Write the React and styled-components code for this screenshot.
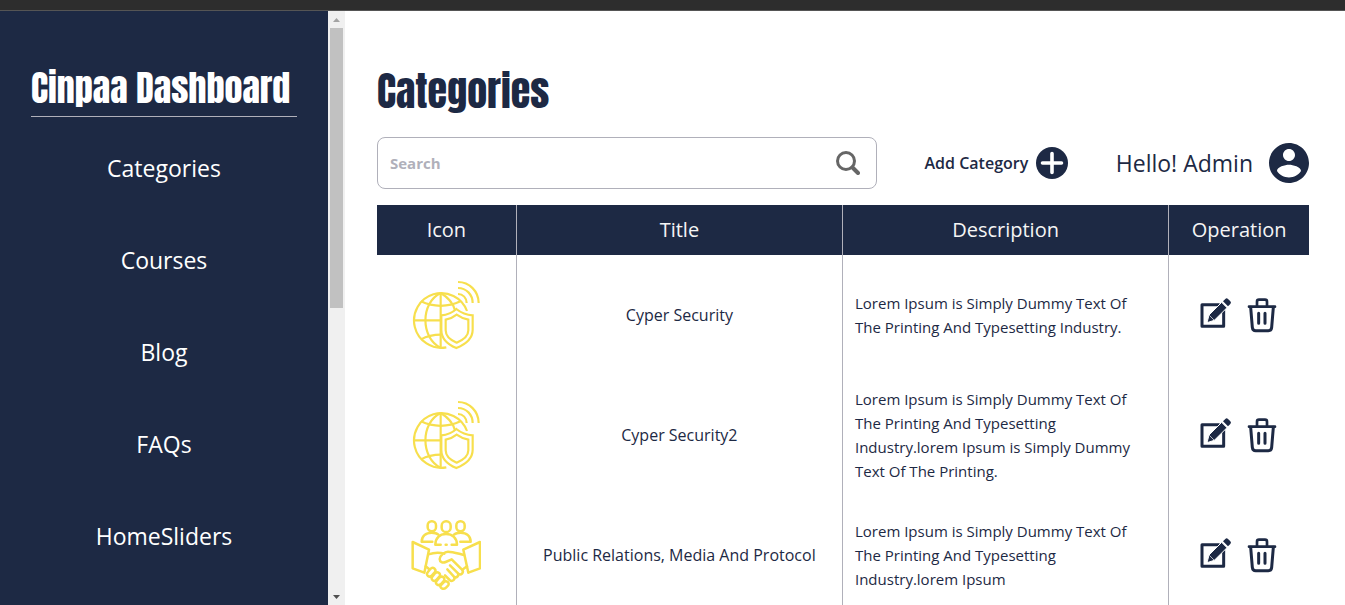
import React from "react";
import styled, { createGlobalStyle } from "styled-components";

const navy = "#1d2944";
const line = "#b0b0ba";
const yellow = "#f7df4d";

const GlobalStyle = createGlobalStyle`
  *, *::before, *::after { box-sizing: border-box; }
  body {
    margin: 0;
    background: #fff;
    color: ${navy};
    font-family: "Open Sans", "Noto Sans", sans-serif;
    font-size: 15px;
    line-height: 24px;
  }
  button { font: inherit; color: inherit; background: none; border: 0; padding: 0; cursor: pointer; }
  svg { display: block; flex: none; }
`;

const Page = styled.div`
  display: flex;
  flex-direction: column;
  height: 100vh;
  overflow: hidden;
`;

const TopStrip = styled.div`
  flex: none;
  height: 11px;
  background: #2d2d2d;
  border-bottom: 1px solid #555;
`;

const Body = styled.div`
  display: flex;
  flex: 1;
  min-height: 0;
`;

const Sidebar = styled.aside`
  flex: none;
  width: 328px;
  padding: 54px 31px 0;
  overflow: hidden;
  background: ${navy};
  color: #fff;
`;

const displayFont = `
  font-family: Anton, Roboto, "Liberation Sans", sans-serif;
  font-weight: 400;
  white-space: nowrap;
`;

const Brand = styled.h2`
  ${displayFont}
  margin: 0 0 23px;
  padding-bottom: 5px;
  border-bottom: 1px solid ${line};
  font-size: 36px;
  line-height: 46px;
`;

const Nav = styled.nav`
  display: flex;
  flex-direction: column;
  gap: 36px;
`;

const NavLink = styled.a`
  padding: 10px 0;
  color: #fff;
  font-size: 23px;
  line-height: 36px;
  text-align: center;
  text-decoration: none;
`;

const ScrollBar = styled.div`
  display: flex;
  flex-direction: column;
  flex: none;
  width: 17px;
  padding: 0 2px;
  background: #f0f0f0;
`;

const ScrollArrow = styled.div`
  display: grid;
  place-items: center;
  flex: none;
  height: 17px;
`;

const ScrollTrack = styled.div`
  flex: 1;
`;

const ScrollThumb = styled.div`
  height: 50%;
  background: #c1c1c1;
`;

const Main = styled.main`
  flex: 1;
  min-width: 0;
  padding: 52px 36px 0 32px;
  overflow: hidden;
`;

const Title = styled.h1`
  ${displayFont}
  margin: 0 0 18px;
  font-size: 40px;
  line-height: 56px;
`;

const Toolbar = styled.div`
  display: flex;
  align-items: center;
  justify-content: space-between;
  margin-bottom: 16px;
`;

const SearchBox = styled.label`
  display: flex;
  align-items: center;
  width: 500px;
  height: 52px;
  padding: 0 16px 0 12px;
  border: 1px solid ${line};
  border-radius: 8px;
`;

const SearchInput = styled.input`
  flex: 1;
  min-width: 0;
  padding: 0;
  border: 0;
  outline: 0;
  background: none;
  color: ${navy};
  font: inherit;
  font-weight: 700;
  &::placeholder { color: ${line}; opacity: 1; }
`;

const AddButton = styled.button`
  display: flex;
  align-items: center;
  gap: 8px;
  font-size: 16px;
  font-weight: 600;
`;

const Greeting = styled.div`
  display: flex;
  align-items: center;
  gap: 16px;
  font-size: 23px;
`;

const Table = styled.table`
  width: 100%;
  table-layout: fixed;
  border-collapse: separate;
  border-spacing: 0;
`;

const HeadCell = styled.th`
  width: ${(p) => p.$width};
  height: 50px;
  padding: 0;
  background: ${navy};
  color: #f5f5f5;
  font-size: 20px;
  font-weight: 500;
  &:not(:last-child) { border-right: 1px solid ${line}; }
`;

const Cell = styled.td`
  height: 120px;
  padding: ${(p) => (p.$text ? "0 24px 0 12px" : "0")};
  font-size: ${(p) => (p.$text ? "15px" : "16px")};
  text-align: ${(p) => (p.$text ? "left" : "center")};
  vertical-align: middle;
  &:not(:last-child) { border-right: 1px solid ${line}; }
`;

const Centered = styled.div`
  display: flex;
  align-items: center;
  justify-content: center;
  gap: 14px;
`;

const Arrow = ({ down }) => (
  <svg width="7" height="4" viewBox="0 0 7 4" aria-hidden="true">
    <path d={down ? "M0 0h7L3.5 4z" : "M0 4h7L3.5 0z"} fill={down ? "#505050" : "#a3a3a3"} />
  </svg>
);

const SearchIcon = () => (
  <svg width="24" height="24" viewBox="0 0 24 24" fill="none" stroke="#666" aria-hidden="true">
    <circle cx="10" cy="10" r="8.5" strokeWidth="3" />
    <path d="M16.5 16.5l5.5 5.5" strokeWidth="4" strokeLinecap="round" />
  </svg>
);

const PlusIcon = () => (
  <svg width="32" height="32" viewBox="0 0 32 32" aria-hidden="true">
    <circle cx="16" cy="16" r="16" fill={navy} />
    <path d="M16 6.500v19M6.500 16h19" stroke="#fff" strokeWidth="3.600" strokeLinecap="round" />
  </svg>
);

const UserIcon = () => (
  <svg width="40" height="40" viewBox="2 2 20 20" fill={navy} aria-hidden="true">
    <path d="M12 2C6.480 2 2 6.480 2 12s4.480 10 10 10 10-4.480 10-10S17.520 2 12 2zm0 3c1.660 0 3 1.340 3 3s-1.340 3-3 3-3-1.340-3-3 1.340-3 3-3zm0 14.200c-2.500 0-4.710-1.280-6-3.220.03-1.990 4-3.080 6-3.080 1.990 0 5.970 1.090 6 3.080-1.290 1.940-3.500 3.220-6 3.220z" />
  </svg>
);

const GlobeIcon = () => (
  <svg width="70" height="70" viewBox="34 30 210 210" fill="none" stroke={yellow} strokeWidth="6.500" aria-label="Network security" role="img">
    <path d="M202 123A82 82 0 1 0 140 232" />
    <path d="M123 69v165M41 151h83" />
    <path d="M123 69C62 98 62 204 123 233M123 69c24 14 38 33 43 52" />
    <path d="M64 94c36 18 82 18 118 0M64 208c18-10 38-14 60-14" />
    <path d="M170 117c15 12 31 18 49 19v43c0 27-22 44-49 55-27-11-45-28-45-55v-43c17-1 32-7 45-19z" />
    <path d="M171 134c11 8 23 13 35 15v32c0 17-15 29-35 37-20-8-33-20-33-37v-32c12-2 23-7 33-15z" />
    <path d="M175 36c34 0 62 28 62 63M175 54c25 0 44 20 44 45M175 72c15 0 26 12 26 27" />
  </svg>
);

const HandshakeIcon = () => (
  <svg width="70" height="70" viewBox="34 45 210 210" fill="none" stroke={yellow} strokeWidth="7.500" strokeLinecap="round" strokeLinejoin="round" aria-label="Public relations" role="img">
    <rect x="84" y="49" width="25" height="30" rx="12" />
    <rect x="126" y="49" width="27" height="32" rx="13" />
    <rect x="170" y="49" width="25" height="30" rx="12" />
    <path d="M98 110H66c0-16 12-27 30-27 9 0 16 2 20 6M182 110h31c0-16-12-27-30-27-9 0-16 2-20 6" />
    <path d="M107 119c0-20 13-32 32-32s33 12 33 32M107 119h16M138 119h3M156 119h16" />
    <path d="M39 111l49 23-14 69-35-13zM241 111l-50 23 15 69 35-13z" />
    <path d="M86 148c18-6 34-6 48-2M193 150c-20-5-34-10-48-10-10 0-25 12-25 22 0 9 9 13 18 9l18-8 31 31c7 8-3 19-11 12M78 184l11 9M202 184l-14 10" />
    <path d="M151 181l22 22c8 8-3 19-11 11l-19-21M162 214c7 9-4 18-12 11l-14-14" />
    <path d="M84 202l8-10c8-9 20 1 13 10l-8 9c-8 9-20-1-13-9zM98 215l8-10c8-8 20 2 13 10l-8 9c-8 9-20-1-13-9zM111 228l8-10c8-8 20 2 13 10l-8 9c-8 8-20-1-13-9zM124 240l8-8c8-8 20 2 13 10l-5 5c-8 9-23 1-16-7z" />
  </svg>
);

const EditIcon = () => (
  <svg width="32" height="36" viewBox="121 51 96 108" aria-hidden="true">
    <path d="M180 74H127v65h65V91" fill="none" stroke={navy} strokeWidth="9" strokeLinejoin="round" />
    <path d="M142 128l6-23 38-38 16 16-38 38z" fill={navy} stroke="#fff" strokeWidth="3" />
    <path d="M190 64l7-7q4-4 8 0l7 7q4 4 0 8l-7 7z" fill={navy} />
    <path d="M149 106l14 14" stroke="#fff" strokeWidth="2" />
  </svg>
);

const TrashIcon = () => (
  <svg width="32" height="36" viewBox="258 51 96 108" fill="none" stroke={navy} strokeWidth="9" strokeLinecap="round" strokeLinejoin="round" aria-hidden="true">
    <path d="M267 80h78M291 78V65q0-6 6-6h18q6 0 6 6v13" strokeWidth="8" />
    <path d="M272 82l5 60q1 10 10 10h38q9 0 10-10l5-60" />
    <path d="M296 100v30M315 100v30" />
  </svg>
);

const links = ["Categories", "Courses", "Blog", "FAQs", "HomeSliders"];

const rows = [
  {
    Icon: GlobeIcon,
    title: "Cyper Security",
    text: "Lorem Ipsum is Simply Dummy Text Of The Printing And Typesetting Industry.",
  },
  {
    Icon: GlobeIcon,
    title: "Cyper Security2",
    text: "Lorem Ipsum is Simply Dummy Text Of The Printing And Typesetting Industry.lorem Ipsum is Simply Dummy Text Of The Printing.",
  },
  {
    Icon: HandshakeIcon,
    title: "Public Relations, Media And Protocol",
    text: "Lorem Ipsum is Simply Dummy Text Of The Printing And Typesetting Industry.lorem Ipsum",
  },
];

export default function App() {
  return (
    <>
      <GlobalStyle />
      <Page>
        <TopStrip />
        <Body>
          <Sidebar>
            <Brand>Cinpaa Dashboard</Brand>
            <Nav>
              {links.map((name) => (
                <NavLink key={name} href={`#${name.toLowerCase()}`}>{name}</NavLink>
              ))}
            </Nav>
          </Sidebar>
          <ScrollBar aria-hidden="true">
            <ScrollArrow><Arrow /></ScrollArrow>
            <ScrollTrack><ScrollThumb /></ScrollTrack>
            <ScrollArrow><Arrow down /></ScrollArrow>
          </ScrollBar>
          <Main>
            <Title>Categories</Title>
            <Toolbar>
              <SearchBox>
                <SearchInput type="search" placeholder="Search" aria-label="Search" />
                <SearchIcon />
              </SearchBox>
              <AddButton type="button">Add Category <PlusIcon /></AddButton>
              <Greeting>Hello! Admin <UserIcon /></Greeting>
            </Toolbar>
            <Table>
              <thead>
                <tr>
                  <HeadCell $width="15%">Icon</HeadCell>
                  <HeadCell $width="35%">Title</HeadCell>
                  <HeadCell $width="35%">Description</HeadCell>
                  <HeadCell $width="15%">Operation</HeadCell>
                </tr>
              </thead>
              <tbody>
                {rows.map(({ Icon, title, text }) => (
                  <tr key={title}>
                    <Cell><Centered><Icon /></Centered></Cell>
                    <Cell>{title}</Cell>
                    <Cell $text>{text}</Cell>
                    <Cell>
                      <Centered>
                        <button type="button" aria-label={`Edit ${title}`}><EditIcon /></button>
                        <button type="button" aria-label={`Delete ${title}`}><TrashIcon /></button>
                      </Centered>
                    </Cell>
                  </tr>
                ))}
              </tbody>
            </Table>
          </Main>
        </Body>
      </Page>
    </>
  );
}
